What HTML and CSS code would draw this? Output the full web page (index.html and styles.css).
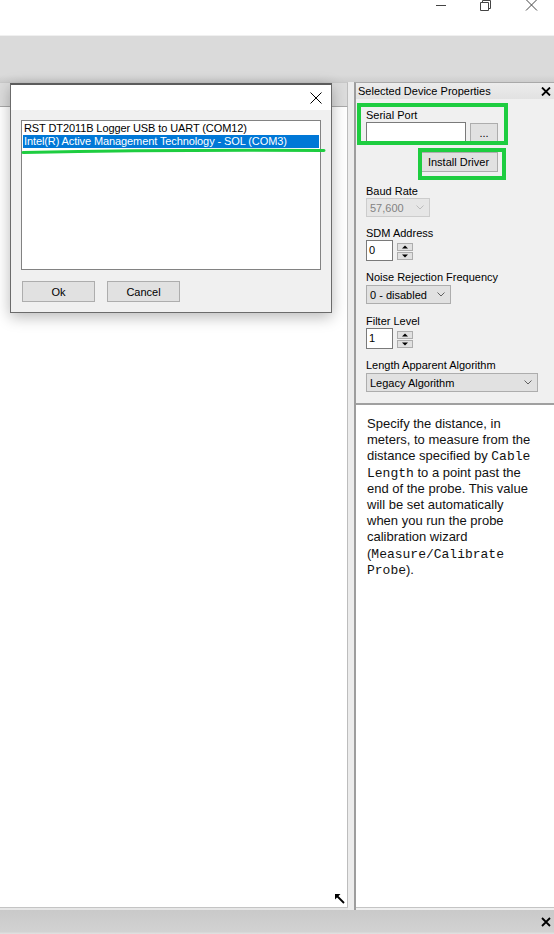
FILE: index.html
```html
<!DOCTYPE html>
<html>
<head>
<meta charset="utf-8">
<title>Selected Device Properties</title>
<link rel="stylesheet" href="styles.css">
</head>
<body>
<div class="app">
  <header class="titlebar">
    <div class="caption-buttons">
      <span class="cap-btn"><svg width="46" height="12" viewBox="0 0 46 12"><path d="M20 5.5 H30" /></svg></span>
      <span class="cap-btn"><svg width="46" height="12" viewBox="0 0 46 12"><path d="M18.5 2.5 H26.5 V10.5 H18.5 Z M20.5 2.5 V0.5 H28.5 V8.5 H26.5" /></svg></span>
      <span class="cap-btn"><svg width="46" height="12" viewBox="0 0 46 12"><path d="M18 -0.5 L29 10.5 M29 -0.5 L18 10.5" /></svg></span>
    </div>
  </header>
  <div class="toolbar"></div>
  <div class="main">
    <section class="left-pane">
      <div class="left-head"></div>
      <div class="left-body">
        <svg class="grip" width="10" height="10" viewBox="0 0 10 10"><path class="grip-head" d="M0 0 H5.5 L0 5.5 Z"/><path class="grip-shaft" d="M2 2 L9 9"/></svg>
      </div>
    </section>
    <div class="splitter"></div>
    <section class="right-pane">
      <div class="pane-head">
        <span>Selected Device Properties</span>
        <svg class="pane-close" width="10" height="9" viewBox="0 0 10 9"><path d="M1 0.5 L9 8.5 M9 0.5 L1 8.5"/></svg>
      </div>
      <div class="props">
        <div class="field">
          <div class="label">Serial Port</div>
          <div class="row">
            <div class="textbox textbox-port"></div>
            <div class="btn btn-dots">...</div>
          </div>
        </div>
        <div class="install-row">
          <div class="btn btn-install">Install Driver</div>
        </div>
        <div class="field field-baud">
          <div class="label">Baud Rate</div>
          <div class="combo combo-baud disabled"><span>57,600</span><svg class="chev" width="8" height="5" viewBox="0 0 8 5"><path d="M0.5 0.5 L4 4 L7.5 0.5"/></svg></div>
        </div>
        <div class="field">
          <div class="label">SDM Address</div>
          <div class="row spin-row">
            <div class="textbox textbox-num">0</div>
            <div class="spinner">
              <div class="spin-btn"><svg width="6" height="4" viewBox="0 0 6 4"><path d="M0 3.5 L3 0.5 L6 3.5 Z"/></svg></div>
              <div class="spin-btn"><svg width="6" height="4" viewBox="0 0 6 4"><path d="M0 0.5 L3 3.5 L6 0.5 Z"/></svg></div>
            </div>
          </div>
        </div>
        <div class="field">
          <div class="label">Noise Rejection Frequency</div>
          <div class="combo combo-noise"><span>0 - disabled</span><svg class="chev" width="8" height="5" viewBox="0 0 8 5"><path d="M0.5 0.5 L4 4 L7.5 0.5"/></svg></div>
        </div>
        <div class="field field-filter">
          <div class="label">Filter Level</div>
          <div class="row spin-row">
            <div class="textbox textbox-num">1</div>
            <div class="spinner">
              <div class="spin-btn"><svg width="6" height="4" viewBox="0 0 6 4"><path d="M0 3.5 L3 0.5 L6 3.5 Z"/></svg></div>
              <div class="spin-btn"><svg width="6" height="4" viewBox="0 0 6 4"><path d="M0 0.5 L3 3.5 L6 0.5 Z"/></svg></div>
            </div>
          </div>
        </div>
        <div class="field">
          <div class="label">Length Apparent Algorithm</div>
          <div class="combo combo-length"><span>Legacy Algorithm</span><svg class="chev" width="8" height="5" viewBox="0 0 8 5"><path d="M0.5 0.5 L4 4 L7.5 0.5"/></svg></div>
        </div>
      </div>
      <div class="help">
        <p>Specify the distance, in meters, to measure from the distance specified by <code>Cable Length</code> to a point past the end of the probe. This value will be set automatically when you run the probe calibration wizard (<code>Measure/Calibrate Probe</code>).</p>
      </div>
    </section>
  </div>
  <footer class="statusbar">
    <svg class="bar-close" width="10" height="10" viewBox="0 0 10 10"><path d="M1 1 L9 9 M9 1 L1 9"/></svg>
  </footer>

  <div class="dialog">
    <div class="dialog-title">
      <svg width="12" height="12" viewBox="0 0 12 12"><path d="M0.5 0.5 L11.5 11.5 M11.5 0.5 L0.5 11.5"/></svg>
    </div>
    <div class="dialog-body">
      <div class="listbox">
        <div class="list-item">RST DT2011B Logger USB to UART (COM12)</div>
        <div class="list-item selected">Intel(R) Active Management Technology - SOL (COM3)</div>
      </div>
      <div class="dialog-buttons">
        <div class="btn dlg-btn">Ok</div>
        <div class="btn dlg-btn">Cancel</div>
      </div>
    </div>
  </div>

  <svg class="annotations" width="554" height="934" viewBox="0 0 554 934">
    <rect x="359" y="105" width="147" height="38"/>
    <rect x="420" y="150" width="84" height="28"/>
    <path class="underline" d="M23 152.5 Q 170 149.5 324 150.5"/>
  </svg>
</div>
</body>
</html>
```

FILE: styles.css
```css
* { box-sizing: border-box; margin: 0; padding: 0; }
html, body { width: 554px; height: 934px; overflow: hidden; }
body {
  font-family: "Liberation Sans", Arial, sans-serif;
  font-size: 11px;
  color: #000;
  background: #fff;
}
.app {
  position: relative;
  width: 554px;
  height: 934px;
  display: flex;
  flex-direction: column;
}

/* title bar */
.titlebar {
  height: 36px;
  background: #fff;
  border-bottom: 1px solid #f0f0f0;
  display: flex;
  justify-content: flex-end;
  align-items: flex-start;
}
.caption-buttons { display: flex; }
.cap-btn { width: 46px; height: 12px; display: block; }
.cap-btn svg { display: block; }
.cap-btn path { fill: none; stroke: #444; stroke-width: 1; }

.toolbar {
  height: 46px;
  background: linear-gradient(#dadada 0%, #dadada 85%, #cdcdcd 100%);
}

/* main area */
.main {
  flex: 1;
  display: flex;
  min-height: 0;
  background: #e6e6e6;
}
.left-pane {
  width: 348px;
  display: flex;
  flex-direction: column;
  padding-bottom: 2px;
}
.left-head {
  height: 25px;
  background: #dcdcdc;
  border-top: 1px solid #c8c8c8;
  border-bottom: 1px solid #a9a9a9;
  border-right: 1px solid #bdbdbd;
}
.left-body {
  position: relative;
  flex: 1;
  background: #fff;
  border-right: 1px solid #bdbdbd;
  border-bottom: 1px solid #c4c4c4;
}
.grip { position: absolute; right: 2px; bottom: 3px; }
.grip-head { fill: #000; }
.grip-shaft { stroke: #000; stroke-width: 1.8; }

.splitter { width: 6px; background: #ececec; }

.right-pane {
  flex: 1;
  display: flex;
  flex-direction: column;
  border-left: 2px solid #9d9d9d;
  border-top: 1px solid #a9a9a9;
  padding-bottom: 2px;
  background: #f0f0f0;
}
.pane-head {
  height: 16px;
  display: flex;
  align-items: center;
  justify-content: space-between;
  padding: 0 3px 0 2px;
  background: linear-gradient(#ececec, #e2e2e2);
  font-size: 11px;
}
.pane-close path { stroke: #000; stroke-width: 1.8; fill: none; }

.props {
  padding: 9px 0 11px 10px;
  display: flex;
  flex-direction: column;
}
.label { height: 14px; line-height: 14px; white-space: nowrap; }
.field { display: flex; flex-direction: column; align-items: flex-start; margin-top: 9px; }
.field:first-child { margin-top: 0; }
.field-baud { margin-top: 12px; }
.field-filter { margin-top: 10px; }
.row { display: flex; align-items: flex-start; gap: 4px; }
.spin-row { align-items: center; }

.textbox {
  height: 21px;
  background: #fff;
  border: 1px solid #7a7a7a;
  line-height: 19px;
  padding-left: 2px;
}
.textbox-port { width: 100px; }
.textbox-num { width: 27px; }

.btn {
  height: 20px;
  background: #e1e1e1;
  border: 1px solid #adadad;
  display: flex;
  align-items: center;
  justify-content: center;
  white-space: nowrap;
}
.btn-dots { width: 28px; margin-top: 1px; align-items: flex-end; padding-bottom: 3px; }
.install-row { width: 132px; display: flex; justify-content: flex-end; margin-top: 9px; }
.btn-install { width: 79px; }

.combo {
  height: 19px;
  margin-top: 1px;
  background: #e1e1e1;
  border: 1px solid #adadad;
  display: flex;
  align-items: center;
  justify-content: space-between;
  padding: 0 5px 0 3px;
  white-space: nowrap;
}
.field-baud .combo { margin-top: 0; }
.combo .chev path { fill: none; stroke: #606060; stroke-width: 1; }
.combo.disabled { background: #e6e6e6; border-color: #cccccc; color: #838383; }
.combo.disabled .chev path { stroke: #bcbcbc; }
.combo-baud { width: 64px; }
.combo-noise { width: 85px; }
.combo-length { width: 172px; }

.spinner { display: flex; flex-direction: column; gap: 1px; margin-top: 1px; }
.spin-btn {
  width: 16px;
  height: 8px;
  background: #e1e1e1;
  border: 1px solid #adadad;
  display: flex;
  align-items: center;
  justify-content: center;
}
.spin-btn path { fill: #000; }

.help {
  flex: 1;
  background: #fff;
  border-top: 2px solid #a0a0a0;
  border-bottom: 1px solid #c4c4c4;
  padding: 11px 17px 0 11px;
  font-size: 13px;
  line-height: 16.2px;
  color: #111;
}
.help code {
  font-family: "Liberation Mono", "Courier New", monospace;
  font-size: 13px;
  line-height: 12px;
}

.statusbar {
  height: 24px;
  background: linear-gradient(#c9c9c9, #d2d2d2 90%, #e2e2e2);
  display: flex;
  align-items: center;
  justify-content: flex-end;
  padding-right: 3px;
}
.bar-close path { stroke: #000; stroke-width: 1.8; fill: none; }

/* modal dialog overlay */
.dialog {
  position: absolute;
  left: 10px;
  top: 83px;
  width: 322px;
  height: 230px;
  border: 1px solid #6b6b6b;
  border-top: 2px solid #5c5c5c;
  background: #f0f0f0;
  box-shadow: 0 4px 14px rgba(0, 0, 0, 0.28);
  display: flex;
  flex-direction: column;
}
.dialog-title {
  height: 25px;
  background: #fff;
  display: flex;
  align-items: center;
  justify-content: flex-end;
  padding-right: 9px;
}
.dialog-title path { stroke: #000; stroke-width: 1; fill: none; }
.dialog-body { padding: 10px 10px 10px 10px; }
.listbox {
  width: 300px;
  height: 150px;
  background: #fff;
  border: 1px solid #828282;
  padding: 1px 1px;
}
.list-item {
  height: 13px;
  line-height: 13px;
  padding-left: 1px;
  white-space: nowrap;
  letter-spacing: -0.1px;
}
.list-item.selected { background: #0078d7; color: #fff; }
.dialog-buttons { display: flex; gap: 12px; margin-top: 11px; padding-left: 1px; }
.dlg-btn { width: 73px; height: 21px; }

.annotations {
  position: absolute;
  left: 0;
  top: 0;
  pointer-events: none;
}
.annotations rect { fill: none; stroke: #1ecd40; stroke-width: 4; }
.annotations .underline { fill: none; stroke: #1ecd40; stroke-width: 3; stroke-linecap: round; }
```
